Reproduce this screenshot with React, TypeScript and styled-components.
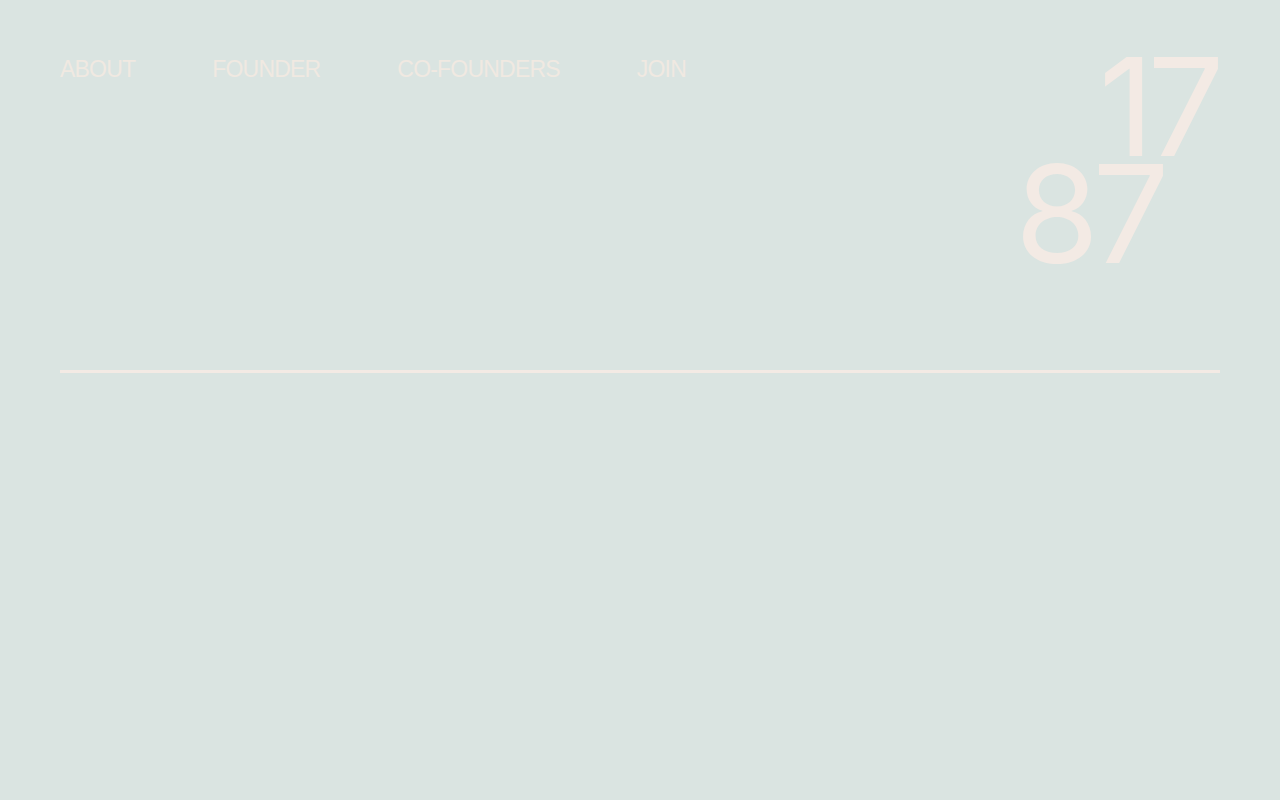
import React from "react";
import styled, { createGlobalStyle } from "styled-components";

const Global = createGlobalStyle`
  html, body { margin: 0; padding: 0; background: #dae4e1; }
  body { font-family: "Liberation Sans", Arial, sans-serif; }
`;
const Page = styled.div`
  width: 1280px; height: 800px; box-sizing: border-box; overflow: hidden;
  background: #dae4e1; padding: 50px 60px 0; color: #f3eae4;
`;
const Header = styled.header`
  display: flex; justify-content: space-between; align-items: flex-start;
  box-sizing: content-box; height: 320px; border-bottom: 3px solid #f3eae4;
`;
const Nav = styled.nav`
  display: flex; gap: 77px; padding-top: 5px;
`;
const NavLink = styled.a`
  font-size: 23px; line-height: 28px; letter-spacing: -0.8px; color: #f0e9e1; text-transform: uppercase;
`;
const Logo = styled.div`
  display: flex; flex-direction: column; align-items: flex-end;
  font-family: Inter, "Liberation Sans", sans-serif; font-weight: 440;
  font-size: 136px; line-height: 107px; letter-spacing: -6.5px;
  margin-right: 2px; padding-top: 3px;
`;
const Second = styled.span`
  padding-right: 55px;
`;
export default function App() {
  return (
    <Page>
      <Global />
      <Header>
        <Nav>
          <NavLink>About</NavLink>
          <NavLink>Founder</NavLink>
          <NavLink>Co-Founders</NavLink>
          <NavLink>Join</NavLink>
        </Nav>
        <Logo>
          <span>17</span>
          <Second>87</Second>
        </Logo>
      </Header>
    </Page>
  );
}
